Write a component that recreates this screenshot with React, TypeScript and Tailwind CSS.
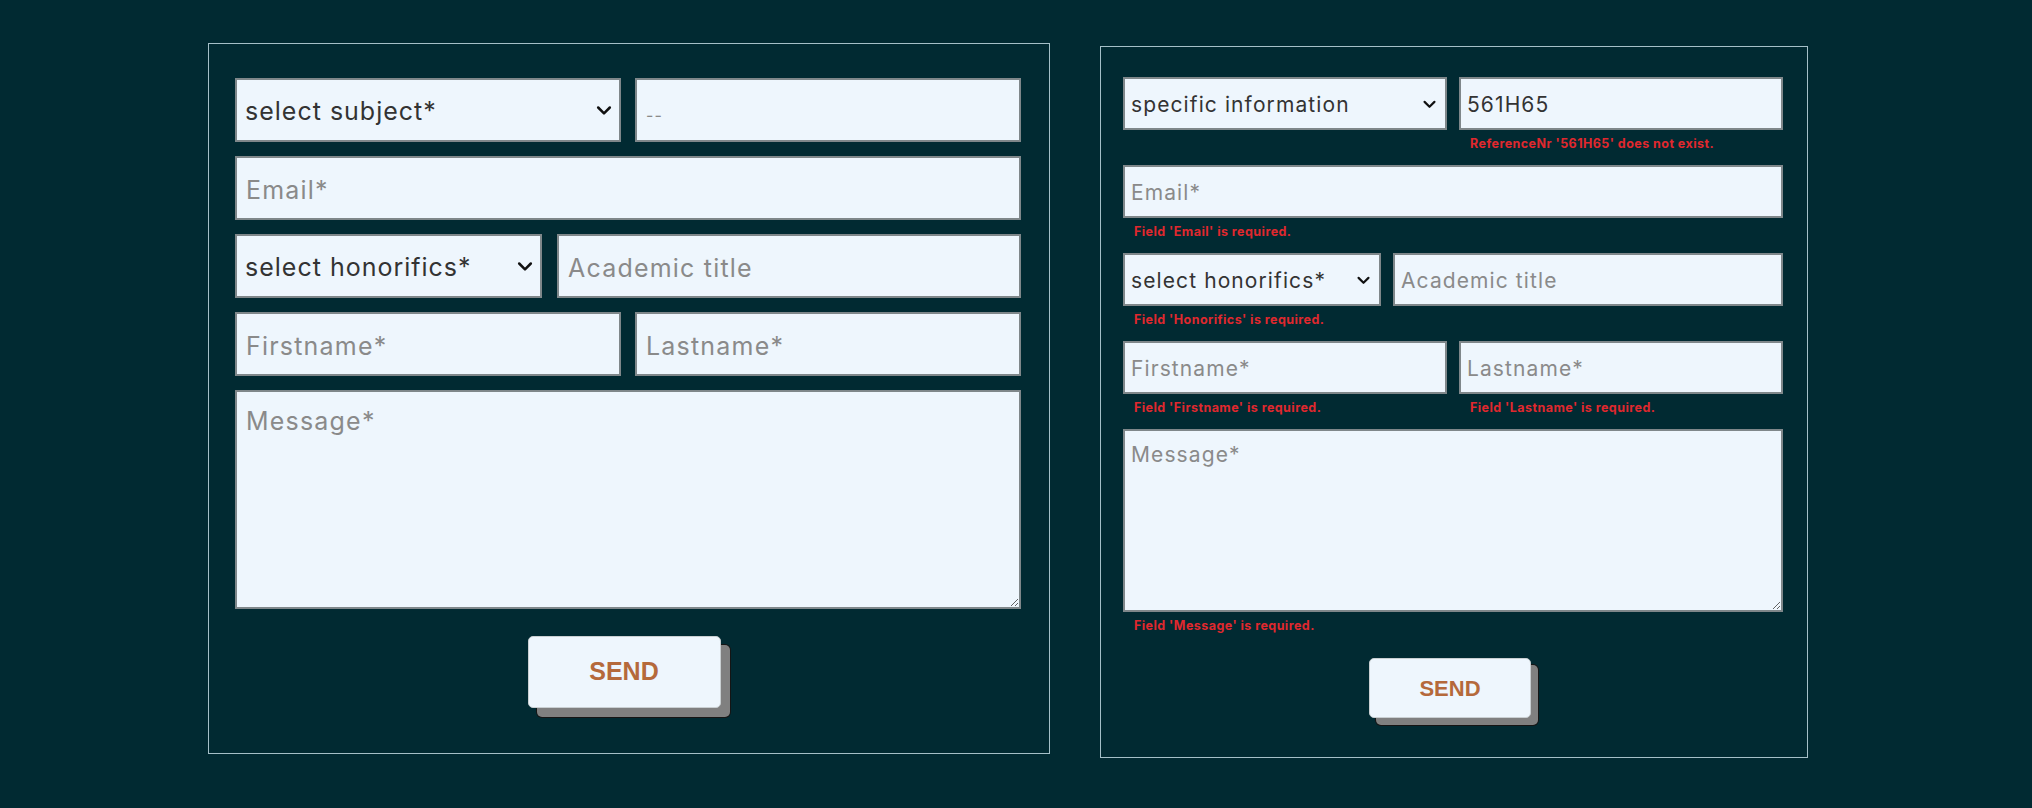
import React from "react";

function Chevron({ big }: { big?: boolean }) {
  return (
    <svg
      width={big ? 20 : 17}
      height={big ? 20 : 17}
      viewBox="0 0 24 24"
      fill="none"
      stroke="#111"
      strokeWidth={3}
      strokeLinecap="round"
      strokeLinejoin="round"
      className={`pointer-events-none absolute top-1/2 -translate-y-1/2 ${
        big ? "right-[7px]" : "right-[9px]"
      }`}
    >
      <polyline points="5 9 12 16 19 9" />
    </svg>
  );
}

function Select({
  label,
  className,
  big,
}: {
  label: string;
  className?: string;
  big?: boolean;
}) {
  return (
    <div className={`relative ${className ?? ""}`}>
      <select
        defaultValue={label}
        className={`w-full appearance-none bg-[#eef6fd] border-2 border-[#7f878a] text-[#333] outline-none ${
          big
            ? "h-[64px] pl-[8px] pt-[4px] text-[25px] tracking-[1px]"
            : "h-[53px] pl-[6px] pt-[2px] text-[21px] tracking-[1.1px]"
        }`}
      >
        <option>{label}</option>
      </select>
      <Chevron big={big} />
    </div>
  );
}

function Field({
  placeholder,
  value,
  big,
  className,
}: {
  placeholder: string;
  value?: string;
  big?: boolean;
  className?: string;
}) {
  return (
    <input
      placeholder={placeholder}
      defaultValue={value}
      className={`w-full bg-[#eef6fd] border-2 border-[#7f878a] text-[#333] placeholder:text-[#8a8a8a] outline-none ${
        big
          ? "h-[64px] px-[9px] pt-[4px] text-[25px] tracking-[1.2px]"
          : "h-[53px] px-[6px] pt-[2px] text-[21px] tracking-[1.1px]"
      } ${className ?? ""}`}
    />
  );
}

function Err({ children }: { children: React.ReactNode }) {
  return (
    <p className="mt-[7px] pl-[11px] text-[12.5px] leading-[14px] tracking-[0.45px] font-bold text-[#e0282e]">
      {children}
    </p>
  );
}

function SendButton({ big }: { big?: boolean }) {
  return (
    <button
      className={`bg-[#eef6fd] border border-[#c9cfd2] rounded-[5px] font-['Liberation_Sans',Arial,sans-serif] font-bold text-[#b5693b] ${
        big
          ? "w-[193px] h-[72px] text-[25px] shadow-[9px_9px_0_0_#808080,9px_9px_0_1px_#151515]"
          : "w-[162px] h-[60px] text-[22px] shadow-[7px_7px_0_0_#808080,7px_7px_0_1px_#151515]"
      }`}
    >
      SEND
    </button>
  );
}

function EmptyForm() {
  return (
    <form className="w-[842px] h-[711px] border border-[#a5c0c8] pl-[26px] pr-[28px] pt-[34px] flex flex-col">
      <div className="flex flex-col gap-[14px]">
        <div className="grid grid-cols-2 gap-[14px]">
          <Select label="select subject*" big />
          <Field placeholder="--" big className="placeholder:text-[16px]" />
        </div>
        <Field placeholder="Email*" big />
        <div className="flex gap-[15px]">
          <Select label="select honorifics*" big className="w-[307px]" />
          <Field placeholder="Academic title" big className="flex-1" />
        </div>
        <div className="grid grid-cols-2 gap-[14px]">
          <Field placeholder="Firstname*" big />
          <Field placeholder="Lastname*" big />
        </div>
        <textarea
          placeholder="Message*"
          className="h-[219px] bg-[#eef6fd] border-2 border-[#7f878a] px-[9px] pt-[11px] text-[25px] tracking-[1.2px] placeholder:text-[#8a8a8a] outline-none"
        />
      </div>
      <div className="mt-[27px] flex justify-center pr-[8px]">
        <SendButton big />
      </div>
    </form>
  );
}

function ErrorForm() {
  return (
    <form className="mt-[3px] w-[708px] h-[712px] border border-[#a5c0c8] pl-[22px] pr-[24px] pt-[30px] flex flex-col">
      <div className="flex flex-col gap-[14px]">
        <div className="grid grid-cols-2 gap-[12px] items-start">
          <Select label="specific information" />
          <div>
            <Field placeholder="--" value="561H65" />
            <Err>ReferenceNr '561H65' does not exist.</Err>
          </div>
        </div>
        <div>
          <Field placeholder="Email*" />
          <Err>Field 'Email' is required.</Err>
        </div>
        <div className="flex gap-[12px] items-start">
          <div className="w-[258px]">
            <Select label="select honorifics*" />
            <Err>Field 'Honorifics' is required.</Err>
          </div>
          <div className="flex-1">
            <Field placeholder="Academic title" />
          </div>
        </div>
        <div className="grid grid-cols-2 gap-[12px]">
          <div>
            <Field placeholder="Firstname*" />
            <Err>Field 'Firstname' is required.</Err>
          </div>
          <div>
            <Field placeholder="Lastname*" />
            <Err>Field 'Lastname' is required.</Err>
          </div>
        </div>
        <div className="flex flex-col">
          <textarea
            placeholder="Message*"
            className="h-[183px] bg-[#eef6fd] border-2 border-[#7f878a] px-[6px] pt-[8px] text-[21px] tracking-[1.1px] placeholder:text-[#8a8a8a] outline-none"
          />
          <Err>Field 'Message' is required.</Err>
        </div>
      </div>
      <div className="mt-[25px] flex justify-center pr-[6px]">
        <SendButton />
      </div>
    </form>
  );
}

export default function App() {
  return (
    <div className="w-[2032px] h-[808px] bg-[#012a32] font-['Inter',sans-serif] pl-[208px] pt-[43px] flex items-start gap-[50px]">
      <EmptyForm />
      <ErrorForm />
    </div>
  );
}
